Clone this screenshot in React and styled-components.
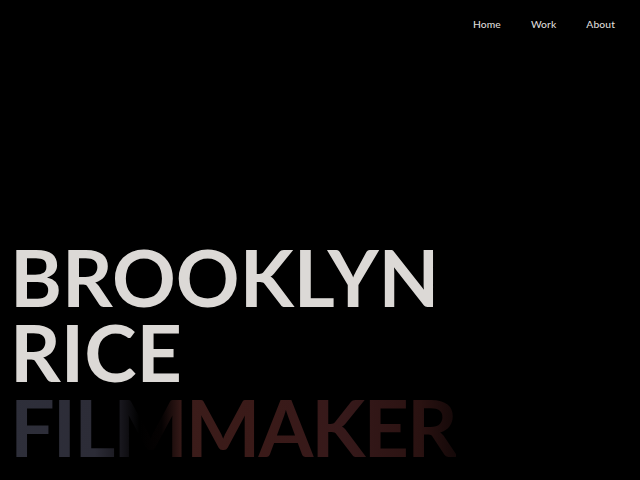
import React from 'react';
import styled, { createGlobalStyle } from 'styled-components';

const GlobalStyle = createGlobalStyle`
  html, body {
    margin: 0;
    padding: 0;
    background: #000;
  }
  body {
    font-family: Lato, "Liberation Sans", sans-serif;
  }
`;

const navItems = ['Home', 'Work', 'About'];

function App() {
  return (
    <Page>
      <GlobalStyle />
      <Header>
        <Nav>
          {navItems.map((item) => (
            <NavLink key={item} href="#">
              {item}
            </NavLink>
          ))}
        </Nav>
      </Header>
      <Hero>
        <Title>BROOKLYN</Title>
        <Title>RICE</Title>
        <VideoTitle>FILMMAKER</VideoTitle>
      </Hero>
    </Page>
  );
}

const Page = styled.div`
  display: flex;
  flex-direction: column;
  width: 100%;
  height: 100vh;
  background-color: #000;
  overflow: hidden;
`;

const Header = styled.header`
  display: flex;
  justify-content: flex-end;
  padding: 17px 25px 0 0;
`;

const Nav = styled.nav`
  display: flex;
  gap: 30px;
`;

const NavLink = styled.a`
  color: #dedbd8;
  font-size: 10.3px;
  font-weight: 500;
  line-height: 14px;
  letter-spacing: 0.1px;
  text-decoration: none;
`;

const Hero = styled.main`
  display: flex;
  flex: 1;
  flex-direction: column;
  justify-content: flex-end;
  padding: 0 0 16px 10px;
`;

const Title = styled.h1`
  margin: 0;
  color: #dcd9d6;
  font-size: 79px;
  font-weight: 700;
  line-height: 75px;
  letter-spacing: 0;
`;

const VideoTitle = styled(Title)`
  display: inline-block;
  align-self: flex-start;
  color: transparent;
  letter-spacing: -2px;
  background-image: linear-gradient(
    90deg,
    #2e2f3a 0%,
    #2c2c37 19%,
    #17161c 25%,
    #000 29%,
    #050202 34%,
    #3b1c1a 39%,
    #3a1a18 55%,
    #36191a 75%,
    #2a1211 92%,
    #140808 100%
  );
  -webkit-background-clip: text;
  background-clip: text;
`;

export default App;
